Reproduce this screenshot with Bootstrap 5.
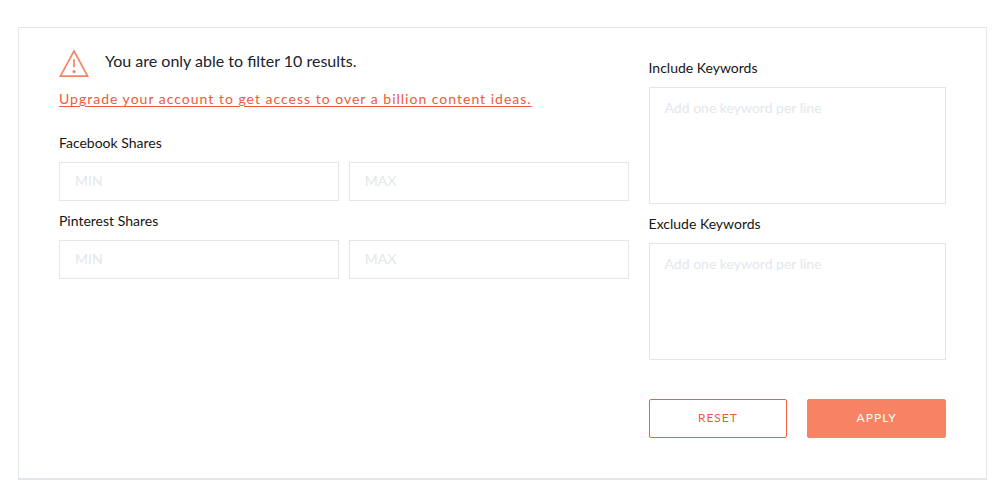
<!DOCTYPE html>
<html lang="en">
<head>
<meta charset="utf-8">
<meta name="viewport" content="width=device-width, initial-scale=1">
<title>Filter results</title>
<link href="https://cdn.jsdelivr.net/npm/bootstrap@5.3.0/dist/css/bootstrap.min.css" rel="stylesheet">
<style>
  body { font-family: Lato, sans-serif; font-size: 14px; line-height: 20px; color: #161616; background: #fff; }
  .page { padding: 27px 20px 16px 18px; }
  .filter-panel { border: 1px solid #e3e6ec; border-bottom-width: 2px; padding: 20px 40px 40px; }
  .panel-cols { --bs-gutter-x: 20px; }
  .range-cols { --bs-gutter-x: 10px; }
  .notice { height: 30px; gap: 16px; margin-bottom: 11px; }
  .notice p { font-size: 16px; line-height: 26px; color: #20232b; }
  .upgrade { color: #f05a38; letter-spacing: 1px; text-underline-offset: 2px; }
  .upgrade:hover { color: #d9482a; }
  .ranges { display: grid; gap: 10px; margin-top: 24px; }
  .field-title { font-size: 14px; line-height: 20px; margin: 10px 0 9px; padding: 0; float: none; }
  legend.field-title { margin-top: 0; }
  .field { border: 1px solid #e3e6ec; border-radius: 0; font-size: 14px; line-height: 20px; padding: 7px 15px 10px; height: 39px; color: #161616; }
  textarea.field { height: 117px; padding: 10px 15px; resize: none; display: block; border-color: #e5e6e8; }
  .field::placeholder { color: #e3e7ee; opacity: 1; }
  .field:focus { border-color: #f78364; box-shadow: none; }
  .actions { gap: 20px; margin-top: 39px; }
  .action { height: 39px; border-radius: 2px; font-size: 12px; line-height: 20px; padding: 7px 8px 9px; letter-spacing: 1px; }
  .action-reset { --bs-btn-color: #f05a38; --bs-btn-border-color: #f0603f; --bs-btn-hover-color: #fff; --bs-btn-hover-bg: #f78364; }
  .action-apply { --bs-btn-color: #fff; --bs-btn-bg: #f78364; --bs-btn-border-color: #f78364; --bs-btn-hover-color: #fff; --bs-btn-hover-bg: #f05a38; }
  @media (min-width: 768px) {
    .col-ranges { flex: 0 0 65%; }
    .col-keywords { flex: 0 0 35%; }
  }
</style>
</head>
<body>
<main class="page">
  <form class="filter-panel">
    <div class="row panel-cols">
      <div class="col-12 col-ranges">
        <div class="notice d-flex">
          <svg width="30" height="30" viewBox="0 0 30 30" fill="none" stroke="#f78364" stroke-width="1.7" class="flex-shrink-0" aria-hidden="true">
            <path d="M15 3 28.6 28.2H1.4Z"/>
            <path d="M15 11.3v8"/>
            <circle cx="15" cy="23.6" r="1.6" fill="#f78364" stroke="none"/>
          </svg>
          <p class="mb-0">You are only able to filter 10 results.</p>
        </div>
        <a class="upgrade d-inline-block" href="#upgrade">Upgrade your account to get access to over a billion content ideas.</a>
        <div class="ranges">
          <fieldset>
            <legend class="field-title">Facebook Shares</legend>
            <div class="row range-cols">
              <div class="col"><input class="form-control field" type="text" placeholder="MIN" aria-label="Minimum Facebook shares"></div>
              <div class="col"><input class="form-control field" type="text" placeholder="MAX" aria-label="Maximum Facebook shares"></div>
            </div>
          </fieldset>
          <fieldset>
            <legend class="field-title">Pinterest Shares</legend>
            <div class="row range-cols">
              <div class="col"><input class="form-control field" type="text" placeholder="MIN" aria-label="Minimum Pinterest shares"></div>
              <div class="col"><input class="form-control field" type="text" placeholder="MAX" aria-label="Maximum Pinterest shares"></div>
            </div>
          </fieldset>
        </div>
      </div>
      <div class="col-12 col-keywords">
        <label class="field-title d-block" for="include">Include Keywords</label>
        <textarea class="form-control field" id="include" placeholder="Add one keyword per line"></textarea>
        <label class="field-title d-block" for="exclude">Exclude Keywords</label>
        <textarea class="form-control field" id="exclude" placeholder="Add one keyword per line"></textarea>
        <div class="actions d-flex">
          <button class="btn action action-reset flex-fill w-50" type="reset">RESET</button>
          <button class="btn action action-apply flex-fill w-50" type="submit">APPLY</button>
        </div>
      </div>
    </div>
  </form>
</main>
<script src="https://cdn.jsdelivr.net/npm/bootstrap@5.3.0/dist/js/bootstrap.bundle.min.js"></script>
</body>
</html>
